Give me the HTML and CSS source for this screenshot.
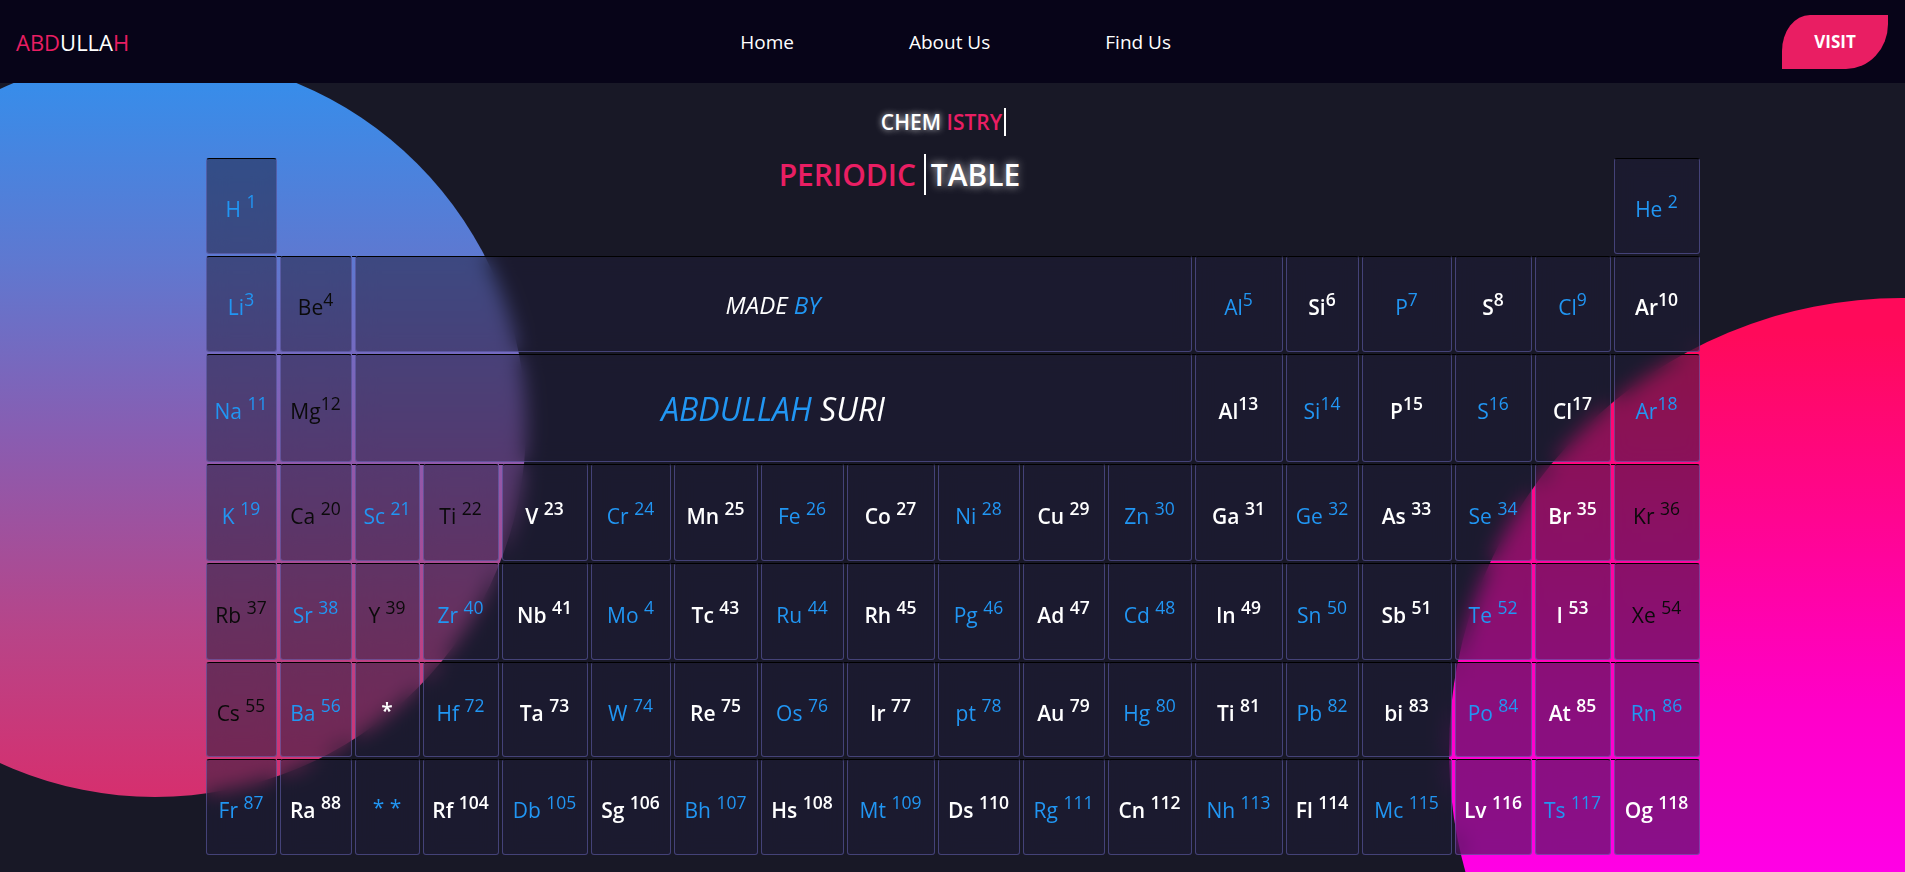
FILE: index.html
```html
<!DOCTYPE html>
<html lang="en">
<head>
<meta charset="utf-8">
<title>Periodic Table</title>
<link rel="stylesheet" href="styles.css">
</head>
<body>
<nav class="nav">
  <div class="logo"><span class="pink">ABD</span><span class="white">ULLA</span><span class="pink">H</span></div>
  <ul class="links">
    <li><a href="#">Home</a></li>
    <li><a href="#">About Us</a></li>
    <li><a href="#">Find Us</a></li>
  </ul>
  <a class="visit" href="#">VISIT</a>
</nav>
<main class="stage">
  <div class="blob blob-left"></div>
  <div class="blob blob-right"></div>
  <div class="content">
    <h2 class="chem"><span class="glow">CHEM</span> <span class="typed">ISTRY</span></h2>
    <div class="ptable">
      <div class="el first b"><span>H <sup>1</sup></span></div>
      <div class="title"><span class="pink">PERIODIC</span> <span class="tbl">TABLE</span></div>
      <div class="el first b"><span>He <sup>2</sup></span></div>

      <div class="el first b"><span>Li<sup>3</sup></span></div>
      <div class="el k"><span>Be<sup>4</sup></span></div>
      <div class="el wide"><span class="made"><span class="white">MADE</span> <span class="blue">BY</span></span></div>
      <div class="el b"><span>Al<sup>5</sup></span></div>
      <div class="el w"><span>Si<sup>6</sup></span></div>
      <div class="el b"><span>P<sup>7</sup></span></div>
      <div class="el w"><span>S<sup>8</sup></span></div>
      <div class="el b"><span>Cl<sup>9</sup></span></div>
      <div class="el w"><span>Ar<sup>10</sup></span></div>

      <div class="el first b"><span>Na <sup>11</sup></span></div>
      <div class="el k"><span>Mg<sup>12</sup></span></div>
      <div class="el wide"><span class="author"><span class="blue">ABDULLAH</span> <span class="white">SURI</span></span></div>
      <div class="el w"><span>Al<sup>13</sup></span></div>
      <div class="el b"><span>Si<sup>14</sup></span></div>
      <div class="el w"><span>P<sup>15</sup></span></div>
      <div class="el b"><span>S<sup>16</sup></span></div>
      <div class="el w"><span>Cl<sup>17</sup></span></div>
      <div class="el b"><span>Ar<sup>18</sup></span></div>

      <div class="el first b"><span>K <sup>19</sup></span></div>
      <div class="el k"><span>Ca <sup>20</sup></span></div>
      <div class="el b"><span>Sc <sup>21</sup></span></div>
      <div class="el k"><span>Ti <sup>22</sup></span></div>
      <div class="el w"><span>V <sup>23</sup></span></div>
      <div class="el b"><span>Cr <sup>24</sup></span></div>
      <div class="el w"><span>Mn <sup>25</sup></span></div>
      <div class="el b"><span>Fe <sup>26</sup></span></div>
      <div class="el w"><span>Co <sup>27</sup></span></div>
      <div class="el b"><span>Ni <sup>28</sup></span></div>
      <div class="el w"><span>Cu <sup>29</sup></span></div>
      <div class="el b"><span>Zn <sup>30</sup></span></div>
      <div class="el w"><span>Ga <sup>31</sup></span></div>
      <div class="el b"><span>Ge <sup>32</sup></span></div>
      <div class="el w"><span>As <sup>33</sup></span></div>
      <div class="el b"><span>Se <sup>34</sup></span></div>
      <div class="el w"><span>Br <sup>35</sup></span></div>
      <div class="el k"><span>Kr <sup>36</sup></span></div>

      <div class="el first k"><span>Rb <sup>37</sup></span></div>
      <div class="el b"><span>Sr <sup>38</sup></span></div>
      <div class="el k"><span>Y <sup>39</sup></span></div>
      <div class="el b"><span>Zr <sup>40</sup></span></div>
      <div class="el w"><span>Nb <sup>41</sup></span></div>
      <div class="el b"><span>Mo <sup>4</sup></span></div>
      <div class="el w"><span>Tc <sup>43</sup></span></div>
      <div class="el b"><span>Ru <sup>44</sup></span></div>
      <div class="el w"><span>Rh <sup>45</sup></span></div>
      <div class="el b"><span>Pg <sup>46</sup></span></div>
      <div class="el w"><span>Ad <sup>47</sup></span></div>
      <div class="el b"><span>Cd <sup>48</sup></span></div>
      <div class="el w"><span>In <sup>49</sup></span></div>
      <div class="el b"><span>Sn <sup>50</sup></span></div>
      <div class="el w"><span>Sb <sup>51</sup></span></div>
      <div class="el b"><span>Te <sup>52</sup></span></div>
      <div class="el w"><span>I <sup>53</sup></span></div>
      <div class="el k"><span>Xe <sup>54</sup></span></div>

      <div class="el first k"><span>Cs <sup>55</sup></span></div>
      <div class="el b"><span>Ba <sup>56</sup></span></div>
      <div class="el w"><span>*</span></div>
      <div class="el b"><span>Hf <sup>72</sup></span></div>
      <div class="el w"><span>Ta <sup>73</sup></span></div>
      <div class="el b"><span>W <sup>74</sup></span></div>
      <div class="el w"><span>Re <sup>75</sup></span></div>
      <div class="el b"><span>Os <sup>76</sup></span></div>
      <div class="el w"><span>Ir <sup>77</sup></span></div>
      <div class="el b"><span>pt <sup>78</sup></span></div>
      <div class="el w"><span>Au <sup>79</sup></span></div>
      <div class="el b"><span>Hg <sup>80</sup></span></div>
      <div class="el w"><span>Ti <sup>81</sup></span></div>
      <div class="el b"><span>Pb <sup>82</sup></span></div>
      <div class="el w"><span>bi <sup>83</sup></span></div>
      <div class="el b"><span>Po <sup>84</sup></span></div>
      <div class="el w"><span>At <sup>85</sup></span></div>
      <div class="el b"><span>Rn <sup>86</sup></span></div>

      <div class="el first b"><span>Fr <sup>87</sup></span></div>
      <div class="el w"><span>Ra <sup>88</sup></span></div>
      <div class="el b"><span>* *</span></div>
      <div class="el w"><span>Rf <sup>104</sup></span></div>
      <div class="el b"><span>Db <sup>105</sup></span></div>
      <div class="el w"><span>Sg <sup>106</sup></span></div>
      <div class="el b"><span>Bh <sup>107</sup></span></div>
      <div class="el w"><span>Hs <sup>108</sup></span></div>
      <div class="el b"><span>Mt <sup>109</sup></span></div>
      <div class="el w"><span>Ds <sup>110</sup></span></div>
      <div class="el b"><span>Rg <sup>111</sup></span></div>
      <div class="el w"><span>Cn <sup>112</sup></span></div>
      <div class="el b"><span>Nh <sup>113</sup></span></div>
      <div class="el w"><span>Fl <sup>114</sup></span></div>
      <div class="el b"><span>Mc <sup>115</sup></span></div>
      <div class="el w"><span>Lv <sup>116</sup></span></div>
      <div class="el b"><span>Ts <sup>117</sup></span></div>
      <div class="el w"><span>Og <sup>118</sup></span></div>
    </div>
  </div>
</main>
</body>
</html>
```

FILE: styles.css
```css
* { box-sizing: border-box; }

html, body {
  margin: 0;
  height: 100%;
  overflow: hidden;
}

body {
  background: #181826;
  color: #fff;
  font-family: "Open Sans", "Noto Sans", "Liberation Sans", sans-serif;
}

.pink { color: #e91e63; }
.white { color: #fff; }
.blue { color: #2196f3; }

/* ---------- navigation ---------- */
.nav {
  position: relative;
  z-index: 2;
  height: 83px;
  background: #070418;
  display: flex;
  align-items: center;
  justify-content: space-between;
  padding: 0 17px 0 16px;
}

.logo {
  font-size: 22px;
  line-height: 1;
}
.logo .white { font-weight: 500; }

.links {
  display: flex;
  gap: 115px;
  list-style: none;
  margin: 0;
  padding: 0;
}
.links a {
  color: #fff;
  text-decoration: none;
  font-size: 19px;
}

.visit {
  width: 106px;
  height: 54px;
  background: #e91e63;
  color: #fff;
  font-weight: 700;
  font-size: 17px;
  text-decoration: none;
  display: flex;
  align-items: center;
  justify-content: center;
  border-radius: 28px 0 42px 0 / 36px 0 45px 0;
}

/* ---------- stage ---------- */
.stage {
  position: relative;
  height: calc(100vh - 83px);
  overflow: hidden;
}

.blob {
  position: absolute;
  border-radius: 50%;
}
.blob-left {
  left: -216px;
  top: -28px;
  width: 742px;
  height: 742px;
  background: linear-gradient(180deg, #3190ee 0%, #5f78d0 28%, #8a5cb0 52%, #b84488 78%, #d62f6e 100%);
}
.blob-right {
  left: 1449px;
  top: 215px;
  width: 906px;
  height: 906px;
  background: linear-gradient(180deg, #ff0a5a 4%, #ff00c8 45%, #ff00f0 70%, #ff00ff 100%);
}

.content {
  position: relative;
}

.chem {
  margin: 25px 0 0;
  font-size: 21px;
  font-weight: 600;
  line-height: 29px;
  text-align: center;
  padding-right: 18px;
}
.chem .glow {
  color: #fff;
  text-shadow: 0 0 6px rgba(255, 255, 255, 0.85);
}
.chem .typed {
  color: #e91e63;
  border-right: 2px solid #fff;
  padding-right: 2px;
}

/* ---------- periodic table ---------- */
.ptable {
  margin-top: 21px;
  display: grid;
  justify-content: center;
  grid-template-columns: 71px 72px 65px 76px 86px 80px 84px 83px 88px 82px 82px 84px 88px 73px 90px 77px 76px 86px;
  grid-template-rows: 96px 96px 108px 97px 97px 95px 96px;
  column-gap: 3px;
  row-gap: 2px;
}

.title {
  grid-column: 2 / 18;
  align-self: start;
  margin-top: -4px;
  font-size: 30px;
  font-weight: 600;
  text-align: center;
  padding-right: 91px;
}
.title .tbl {
  color: #fff;
  border-left: 2px solid #fff;
  padding-left: 5px;
  text-shadow: 0 0 8px rgba(255, 255, 255, 0.8);
}

.el {
  position: relative;
  display: flex;
  align-items: center;
  justify-content: center;
  font-size: 21px;
  border: 1px solid rgba(120, 115, 210, 0.45);
  border-top-color: #000;
  border-radius: 3px;
  background: rgba(30, 28, 56, 0.52);
  -webkit-backdrop-filter: blur(10px);
  backdrop-filter: blur(10px);
}
.el::before {
  content: "";
  position: absolute;
  top: -1px;
  left: -4px;
  width: 4px;
  height: 1px;
  background: #000;
}
.el.first::before { display: none; }

.el sup {
  font-size: smaller;
  vertical-align: 9px;
  line-height: normal;
}

.b { color: #2196f3; }
.w { color: #fff; font-weight: 600; }
.k { color: #0a0a0a; }

.wide { grid-column: span 10; }

.made {
  font-style: italic;
  font-size: 24px;
}
.author {
  font-style: italic;
  font-size: 32px;
}
```
